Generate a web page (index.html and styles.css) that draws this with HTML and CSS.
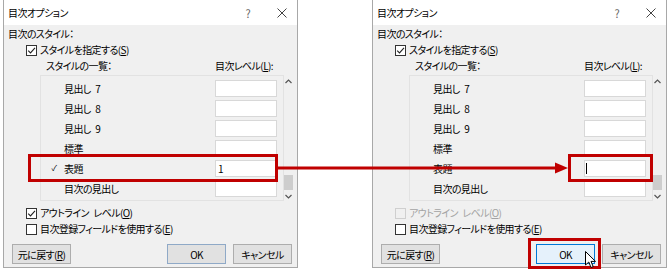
FILE: index.html
```html
<!DOCTYPE html>
<html lang="ja">
<head>
  <meta charset="UTF-8">
  <title>目次オプション</title>
  <link rel="stylesheet" href="styles.css">
</head>
<body>

<div class="stage">

  <!-- before -->
  <div class="dialog">
    <div class="titlebar">
      <span class="title">目次オプション</span>
      <span class="help">?</span>
      <svg class="close" width="10" height="10" viewBox="0 0 10 10"><path d="M0.5 0.5 L9.5 9.5 M9.5 0.5 L0.5 9.5" stroke="#444" stroke-width="1"/></svg>
    </div>
    <div class="body">
      <div class="line">目次のスタイル：</div>
      <div class="line check-line indent">
        <span class="box checked"><svg width="9" height="9" viewBox="0 0 9 9"><path d="M1.2 4.6 L3.5 6.9 L8 1.8" fill="none" stroke="#222" stroke-width="1.1"/></svg></span>
        <span>スタイルを指定する(<u>S</u>)</span>
      </div>
      <div class="line heads">
        <span class="head-name">スタイルの一覧：</span>
        <span class="head-level">目次レベル(<u>L</u>):</span>
      </div>
      <div class="listwrap">
        <div class="list">
          <div class="row"><span class="tick"></span><span class="name">見出し 7</span><span class="field"></span></div>
          <div class="row"><span class="tick"></span><span class="name">見出し 8</span><span class="field"></span></div>
          <div class="row"><span class="tick"></span><span class="name">見出し 9</span><span class="field"></span></div>
          <div class="row"><span class="tick"></span><span class="name">標準</span><span class="field"></span></div>
          <div class="row"><span class="tick">✓</span><span class="name">表題</span><span class="field">1</span></div>
          <div class="row"><span class="tick"></span><span class="name">目次の見出し</span><span class="field"></span></div>
        </div>
        <div class="scroll">
          <svg class="arr" width="7" height="5" viewBox="0 0 7 5"><path d="M0.5 4 L3.5 1 L6.5 4" fill="none" stroke="#555" stroke-width="1.2"/></svg>
          <span class="thumb"></span>
          <svg class="arr" width="7" height="5" viewBox="0 0 7 5"><path d="M0.5 1 L3.5 4 L6.5 1" fill="none" stroke="#555" stroke-width="1.2"/></svg>
        </div>
      </div>
      <div class="line check-line indent outline">
        <span class="box checked"><svg width="9" height="9" viewBox="0 0 9 9"><path d="M1.2 4.6 L3.5 6.9 L8 1.8" fill="none" stroke="#222" stroke-width="1.1"/></svg></span>
        <span>アウトライン レベル(<u>O</u>)</span>
      </div>
      <div class="line check-line indent">
        <span class="box"></span>
        <span>目次登録フィールドを使用する(<u>E</u>)</span>
      </div>
      <div class="buttons">
        <span class="btn">元に戻す(<u>R</u>)</span>
        <span class="spacer"></span>
        <span class="btn default">OK</span>
        <span class="btn">キャンセル</span>
      </div>
    </div>
  </div>

  <!-- after -->
  <div class="dialog">
    <div class="titlebar">
      <span class="title">目次オプション</span>
      <span class="help">?</span>
      <svg class="close" width="10" height="10" viewBox="0 0 10 10"><path d="M0.5 0.5 L9.5 9.5 M9.5 0.5 L0.5 9.5" stroke="#444" stroke-width="1"/></svg>
    </div>
    <div class="body">
      <div class="line">目次のスタイル：</div>
      <div class="line check-line indent">
        <span class="box checked"><svg width="9" height="9" viewBox="0 0 9 9"><path d="M1.2 4.6 L3.5 6.9 L8 1.8" fill="none" stroke="#222" stroke-width="1.1"/></svg></span>
        <span>スタイルを指定する(<u>S</u>)</span>
      </div>
      <div class="line heads">
        <span class="head-name">スタイルの一覧：</span>
        <span class="head-level">目次レベル(<u>L</u>):</span>
      </div>
      <div class="listwrap">
        <div class="list">
          <div class="row"><span class="tick"></span><span class="name">見出し 7</span><span class="field"></span></div>
          <div class="row"><span class="tick"></span><span class="name">見出し 8</span><span class="field"></span></div>
          <div class="row"><span class="tick"></span><span class="name">見出し 9</span><span class="field"></span></div>
          <div class="row"><span class="tick"></span><span class="name">標準</span><span class="field"></span></div>
          <div class="row"><span class="tick"></span><span class="name">表題</span><span class="field"><span class="caret"></span></span></div>
          <div class="row"><span class="tick"></span><span class="name">目次の見出し</span><span class="field"></span></div>
        </div>
        <div class="scroll">
          <svg class="arr" width="7" height="5" viewBox="0 0 7 5"><path d="M0.5 4 L3.5 1 L6.5 4" fill="none" stroke="#555" stroke-width="1.2"/></svg>
          <span class="thumb"></span>
          <svg class="arr" width="7" height="5" viewBox="0 0 7 5"><path d="M0.5 1 L3.5 4 L6.5 1" fill="none" stroke="#555" stroke-width="1.2"/></svg>
        </div>
      </div>
      <div class="line check-line indent outline disabled">
        <span class="box"></span>
        <span>アウトライン レベル(<u>O</u>)</span>
      </div>
      <div class="line check-line indent">
        <span class="box"></span>
        <span>目次登録フィールドを使用する(<u>E</u>)</span>
      </div>
      <div class="buttons">
        <span class="btn">元に戻す(<u>R</u>)</span>
        <span class="spacer"></span>
        <span class="btn hover">OK</span>
        <span class="btn">キャンセル</span>
      </div>
    </div>
  </div>

  <!-- callouts drawn over both dialogs -->
  <div class="mark mark-row"></div>
  <div class="mark mark-field"></div>
  <div class="mark mark-ok"></div>
  <svg class="arrow" width="292" height="12" viewBox="0 0 292 12">
    <rect x="0" y="4.5" width="280" height="3" fill="#c00000"/>
    <path d="M278 0.5 L291 6 L278 11.5 Z" fill="#c00000"/>
  </svg>
  <svg class="pointer" width="12" height="18" viewBox="0 0 12 18">
    <path d="M0.5 0.5 L0.5 14 L3.8 11 L6 16.5 L8.2 15.6 L6 10.4 L10.5 10.4 Z" fill="#fff" stroke="#000" stroke-width="1" stroke-linejoin="round"/>
  </svg>
</div>

</body>
</html>
```

FILE: styles.css
```css
body { margin: 0; background: #fff; font-family: "Noto Sans CJK JP", "Noto Sans", sans-serif; font-size: 10px; color: #000; font-feature-settings: "palt"; letter-spacing: -0.6px; word-spacing: 3px; }
u { text-decoration: underline; text-underline-offset: 1px; }

.stage { position: relative; display: flex; gap: 74px; padding-left: 3px; width: 669px; height: 273px; box-sizing: border-box; }

.dialog { width: 295px; height: 268px; box-sizing: border-box; border: 1px solid #a8a8a8; border-top: none; display: flex; flex-direction: column; }

.titlebar { height: 25px; background: #fff; display: flex; align-items: center; padding-left: 4px; flex: none; }
.title { flex: 1; }
.help { color: #666; font-size: 11px; margin-right: 27px; }
.close { margin-right: 10px; }

.body { flex: 1; background: #f0f0f0; padding: 2px 0 0 4px; }
.line { height: 14px; line-height: 14px; margin-bottom: 2px; display: flex; align-items: center; }
.indent { padding-left: 18px; }
.check-line { margin-top: 1px; }
.box { width: 11px; height: 11px; box-sizing: border-box; border: 1px solid #333; background: #fff; margin-right: 3px; display: flex; align-items: center; justify-content: center; flex: none; }
.heads { padding-left: 38px; }
.head-name { width: 169px; }

.listwrap { display: flex; height: 126px; margin-top: 1px; padding-left: 32px; }
.list { width: 244px; box-sizing: border-box; border: 1px solid #e2e2e2; padding-top: 4px; }
.row { height: 20px; display: flex; align-items: flex-start; }
.tick { width: 23px; font-size: 8px; line-height: 15px; text-align: center; padding-left: 3px; box-sizing: border-box; }
.name { flex: 1; line-height: 17px; }
.field { width: 62px; height: 17px; box-sizing: border-box; border: 1px solid #d8d8d8; background: #fff; margin-right: 6px; line-height: 15px; padding-left: 2px; position: relative; }
.caret { position: absolute; left: 1px; top: 2px; width: 1px; height: 11px; background: #000; }

.scroll { flex: 1; display: flex; flex-direction: column; align-items: center; padding: 4px 4px 0 0; }
.thumb { width: 9px; height: 15px; background: #cdcdcd; margin-top: auto; margin-bottom: 4px; }
.scroll .arr:last-child { margin-bottom: 2px; }

.outline { margin-top: 5px; }
.disabled { color: #a3a3a3; }
.disabled .box { border-color: #cfcfcf; background: #f0f0f0; }

.buttons { display: flex; gap: 7px; margin-top: 8px; padding-right: 5px; }
.spacer { flex: 1; }
.btn { width: 59px; height: 20px; box-sizing: border-box; border: 1px solid #adadad; background: #e1e1e1; display: flex; align-items: center; justify-content: center; }
.btn:first-child { margin-left: 4px; }
.btn.default { border-color: #8fa9c7; }
.btn.hover { border-color: #0078d7; background: #e5f1fb; }

.mark { position: absolute; border: 3px solid #c00000; box-sizing: border-box; }
.mark-row { left: 28px; top: 154px; width: 250px; height: 28px; }
.mark-field { left: 568px; top: 154px; width: 85px; height: 28px; }
.mark-ok { left: 528px; top: 238px; width: 73px; height: 31px; }
.arrow { position: absolute; left: 277px; top: 162px; }
.pointer { position: absolute; left: 585px; top: 251px; }
```
